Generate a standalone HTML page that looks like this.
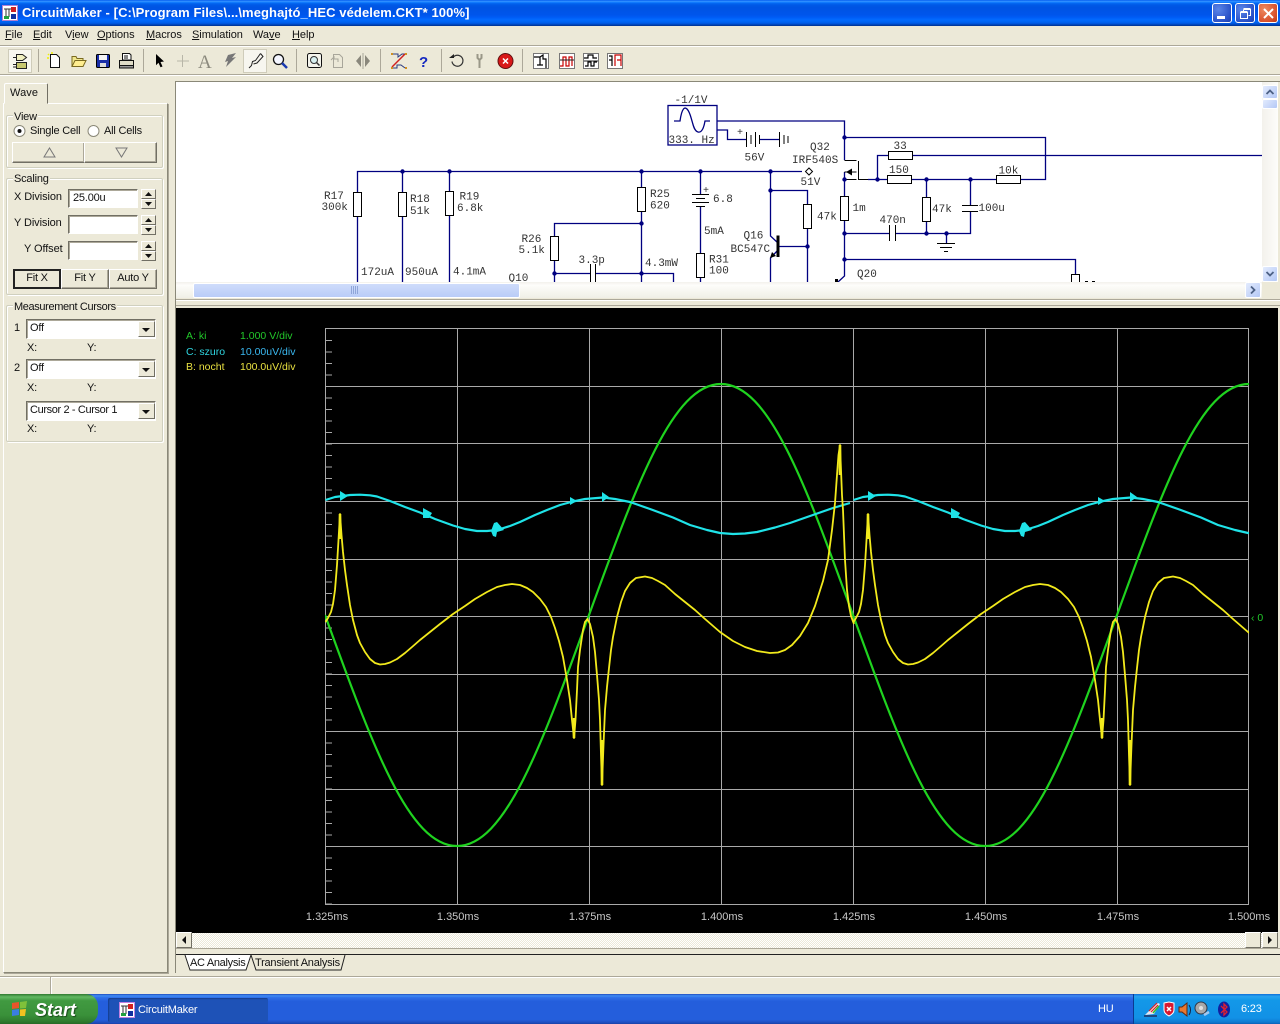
<!DOCTYPE html>
<html><head><meta charset="utf-8"><title>CircuitMaker</title>
<style>
html,body{margin:0;padding:0;width:1280px;height:1024px;overflow:hidden;background:#ece9d8}
body{position:relative;font-family:"Liberation Sans",sans-serif;font-size:11px;letter-spacing:-.2px;color:#111}
.a{position:absolute;box-sizing:border-box}
.t{position:absolute;white-space:nowrap;line-height:14px}
.m{letter-spacing:-.05px}
.u{text-decoration:underline}
.grp{position:absolute;box-sizing:border-box;border:1px solid #d0d0bf;box-shadow:inset 1px 1px 0 #fff,1px 1px 0 #fff;border-radius:2px}
.btn{position:absolute;box-sizing:border-box;background:#ece9d8;border:1px solid;border-color:#fff #716f64 #716f64 #fff;box-shadow:inset -1px -1px 0 #aca899;text-align:center;line-height:17px}
.inp{position:absolute;box-sizing:border-box;background:#fff;border:1px solid;border-color:#716f64 #fff #fff #716f64;box-shadow:inset 1px 1px 0 #aca899;padding-left:4px;line-height:17px}
.xb{position:absolute;box-sizing:border-box;width:20px;height:20px;top:3px;border:1px solid #fff;border-radius:3px;background:radial-gradient(circle at 30% 30%,#5a85e8,#2a52c8 70%,#1c3fae)}
.sb{position:absolute;box-sizing:border-box;width:16px;height:16px;background:linear-gradient(135deg,#e3ebfd,#b4c8f6);border:1px solid #fff;border-radius:2px}
.cl{position:absolute;box-sizing:border-box;background:#ece9d8;border:1px solid;border-color:#fff #716f64 #716f64 #fff}
svg{position:absolute;display:block}
</style></head>
<body>

<!-- Title bar -->
<div class="a" style="left:0;top:0;width:1280px;height:26px;background:linear-gradient(#0058ee,#3593ff 5%,#127dff 9%,#0262ee 14%,#0057e5 22%,#0054e3 30%,#0055eb 56%,#005bf5 66%,#026afe 76%,#0062ef 86%,#0052d6 92%,#0040ab 96%,#003092)"></div>
<svg style="left:2px;top:5px" width="16" height="16" viewBox="0 0 16 16"><rect x=".5" y=".5" width="15" height="15" fill="#fff" stroke="#b080d0"/><path d="M2 4h7M4 4v8M7 4v8" stroke="#333" fill="none"/><rect x="9" y="2" width="5" height="5" fill="#d02020"/><rect x="9" y="9" width="5" height="5" fill="#1030a0"/><rect x="2" y="11" width="5" height="3" fill="#20a040"/></svg>
<div class="t" style="left:22px;top:6px;color:#fff;font-weight:bold;font-size:13px;letter-spacing:.09px">CircuitMaker - [C:\Program Files\...\meghajtó_HEC védelem.CKT* 100%]</div>
<div class="xb" style="left:1212px"><div class="a" style="left:4px;top:12px;width:8px;height:3px;background:#fff"></div></div>
<div class="xb" style="left:1235px"><svg style="left:3px;top:3px" width="13" height="13"><path d="M4.500 2.500h7v6h-2M4.500 2.500v2M4.500 1.500h7" fill="none" stroke="#fff"/><rect x="1.500" y="5.500" width="7" height="6" fill="none" stroke="#fff"/><path d="M1.500 4.500h7" stroke="#fff"/></svg></div>
<div class="xb" style="left:1258px;background:radial-gradient(circle at 30% 30%,#ee8a60,#d8502c 70%,#b83a18)"><svg style="left:3px;top:3px" width="13" height="13"><path d="M2 2l9 9M11 2l-9 9" stroke="#fff" stroke-width="2"/></svg></div>

<!-- Menu -->
<div class="t m" style="left:5px;top:28px"><span class="u">F</span>ile</div>
<div class="t m" style="left:33px;top:28px"><span class="u">E</span>dit</div>
<div class="t m" style="left:65px;top:28px">V<span class="u">i</span>ew</div>
<div class="t m" style="left:97px;top:28px"><span class="u">O</span>ptions</div>
<div class="t m" style="left:146px;top:28px"><span class="u">M</span>acros</div>
<div class="t m" style="left:192px;top:28px"><span class="u">S</span>imulation</div>
<div class="t m" style="left:253px;top:28px">Wa<span class="u">v</span>e</div>
<div class="t m" style="left:292px;top:28px"><span class="u">H</span>elp</div>
<div class="a" style="left:0;top:45px;width:1280px;height:1px;background:#aca899"></div>
<div class="a" style="left:0;top:46px;width:1280px;height:1px;background:#fff"></div>
<div class="a" style="left:0;top:74px;width:1280px;height:1px;background:#aca899"></div>
<div class="a" style="left:0;top:75px;width:1280px;height:1px;background:#fff"></div>

<!-- Toolbar -->
<svg style="left:0;top:46px" width="640" height="30" viewBox="0 46 640 30">
<g fill="none" stroke="#aca899"><path d="M38.500 49v23M143.500 49v23M296.500 49v23M380.500 49v23M441.500 49v23M522.500 49v23"/></g>
<g fill="#f7f6ef"><rect x="8.500" y="49.500" width="23" height="23"/><rect x="243.500" y="49.500" width="23" height="23"/></g>
<g fill="none" stroke="#cfccba"><rect x="8.500" y="49.500" width="23" height="23"/><rect x="243.500" y="49.500" width="23" height="23"/></g>
<path d="M16.500 54.500h6l4 3-4 3h-6zM13 57.500h3M13 64.500h3M13 67h3" fill="#f0efc0" stroke="#222"/><path d="M16.500 62.500h10v6h-10z" fill="#c8c870" stroke="#222"/>
<path d="M50.500 54.500h6l3 3v10h-9z" fill="#fff" stroke="#111"/><path d="M48 54l1 1M47 58h2M52 52v2" stroke="#f0f000" stroke-width="1.500"/>
<path d="M72 66.500v-10h4l1 2h6v8z" fill="#f0e68c" stroke="#7a6a20"/><path d="M72 66.500l3-6h11l-3 6z" fill="#ffee90" stroke="#7a6a20"/>
<rect x="96.500" y="54.500" width="13" height="13" rx="1" fill="#1a2fa8" stroke="#000"/><rect x="99" y="55" width="8" height="5" fill="#f4f4f4"/><rect x="100" y="63" width="6" height="4" fill="#ddd"/>
<path d="M122.500 53.500h7l1.500 1.500v5h-8.500z" fill="#fff" stroke="#111"/><path d="M124 56h4M124 58h4" stroke="#111"/><rect x="119.500" y="60.500" width="14" height="5" fill="#e0ddc8" stroke="#111"/><rect x="119.500" y="65.500" width="14" height="2.500" fill="#999" stroke="#111"/>
<path d="M156 54l8 7.500-3.500.5 2 4.500-2 .8-2-4.500-2.500 2.500z" fill="#000"/>
<path d="M182.500 55v12M177 61h12" stroke="#b8b6a8"/>
<text x="198" y="68" font-family="Liberation Serif,serif" font-size="19" letter-spacing="0" fill="#8c8a7e">A</text>
<path d="M236 53l-8 2-3 7 3-1-2 6 10-10-4 1z" fill="#777"/>
<path d="M260.500 53.500l-5 7-3 1-1 4-2.500 2.500M260.500 53.500l2.500 3-6 6.500-3.500 1" fill="none" stroke="#222"/>
<circle cx="278.500" cy="59.500" r="5" fill="#f4f6ff" stroke="#111" stroke-width="1.300"/><path d="M282 63l5 5" stroke="#1a3ab0" stroke-width="2.500"/>
<rect x="307.500" y="53.500" width="14" height="14" rx="2" fill="#f4f4ec" stroke="#111"/><circle cx="314" cy="60" r="3.500" fill="#d8f0f0" stroke="#333"/><path d="M316.500 62.500l3 3" stroke="#333" stroke-width="1.500"/>
<path d="M333.500 54.500h6l3 3v10h-9zM331 60l3-3v2h4v3" fill="none" stroke="#a8a69a"/>
<path d="M361 55l-5 6 5 6zM365 55l5 6-5 6z" fill="#8a887c"/><path d="M363 53v16" stroke="#a8a69a"/>
<path d="M392 54h6v3l4-3h3M392 68h5v-3h4l4 3" fill="none" stroke="#2a3a80"/><path d="M392 67l13-13" stroke="#d02020" stroke-width="1.500"/><g fill="#d09020"><rect x="391" y="53" width="2" height="2"/><rect x="405" y="53" width="2" height="2"/><rect x="391" y="67" width="2" height="2"/><rect x="405" y="67" width="2" height="2"/></g>
<text x="419" y="67" font-family="Liberation Sans,sans-serif" font-weight="bold" font-size="15" letter-spacing="0" fill="#1428c0">?</text>
<path d="M453 57.500a5.500 5.500 0 1 1-1 4" fill="none" stroke="#333" stroke-width="1.200"/><path d="M449 58h5v-4z" fill="#222"/>
<path d="M477.500 54v4l2 2 2-2v-4M479.500 60v8" fill="none" stroke="#9a9888" stroke-width="2"/>
<circle cx="505.500" cy="61" r="7.500" fill="#d81818" stroke="#601010"/><path d="M503 58.500l5 5M508 58.500l-5 5" stroke="#fff" stroke-width="1.500"/>
<rect x="533.500" y="53.500" width="15" height="15" fill="#fff" stroke="#777"/><path d="M534 57h6v8M540 57l3-2v4h3v9M537 65h6" fill="none" stroke="#000" stroke-width="1.200"/>
<rect x="559.500" y="53.500" width="15" height="15" fill="#fff" stroke="#777"/><path d="M560 66h3v-9h3v9h3v-9h3v9" fill="none" stroke="#c80000" stroke-width="1.200"/><path d="M560 60h14" stroke="#222"/>
<rect x="583.500" y="53.500" width="15" height="15" fill="#fff" stroke="#777"/><path d="M584 58h4v-3h5v3h4M585 66h3v-4h3v4h3v-4h3" fill="none" stroke="#000" stroke-width="1.200"/><path d="M584 61h14" stroke="#222"/>
<rect x="607.500" y="53.500" width="15" height="15" fill="#fff" stroke="#777"/><path d="M609 56h3v10M609 60h3" fill="none" stroke="#000" stroke-width="1.200"/><path d="M615 66v-11h6v11M617 60h4" fill="none" stroke="#c80000" stroke-width="1.200"/>
</svg>

<!-- Left panel -->
<div class="a" style="left:3px;top:103px;width:165px;height:870px;border:1px solid;border-color:#fff #8a8878 #8a8878 #fff;box-shadow:1px 1px 0 #aca899"></div>
<div class="a" style="left:4px;top:83px;width:44px;height:21px;background:#ece9d8;border:1px solid;border-color:#fff #716f64 transparent #fff;border-radius:2px 2px 0 0"></div>
<div class="t" style="left:10px;top:86px;letter-spacing:.1px">Wave</div>

<div class="grp" style="left:6px;top:115px;width:157px;height:53px"></div>
<div class="t" style="left:13px;top:110px;background:#ece9d8;padding:0 1px">View</div>
<svg style="left:13px;top:124px" width="90" height="14"><circle cx="6.500" cy="7" r="5.500" fill="#fff" stroke="#8a8878"/><circle cx="6.500" cy="7" r="2" fill="#111"/><circle cx="80.500" cy="7" r="5.500" fill="#fff" stroke="#8a8878"/></svg>
<div class="t" style="left:30px;top:124px">Single Cell</div>
<div class="t" style="left:104px;top:124px">All Cells</div>
<div class="btn" style="left:12px;top:142px;width:73px;height:21px"></div>
<div class="btn" style="left:84px;top:142px;width:73px;height:21px"></div>
<svg style="left:40px;top:146px" width="90" height="13"><path d="M4 11L9.500 2 15 11z M76 2h11l-5.500 9z" fill="none" stroke="#777"/></svg>

<div class="grp" style="left:6px;top:178px;width:157px;height:117px"></div>
<div class="t" style="left:13px;top:172px;background:#ece9d8;padding:0 1px">Scaling</div>
<div class="t" style="left:14px;top:190px;letter-spacing:-.1px">X Division</div>
<div class="inp" style="left:68px;top:189px;width:70px;height:19px">25.00u</div>
<div class="t" style="left:14px;top:216px;letter-spacing:-.1px">Y Division</div>
<div class="inp" style="left:68px;top:215px;width:70px;height:19px"></div>
<div class="t" style="left:24px;top:242px;letter-spacing:-.1px">Y Offset</div>
<div class="inp" style="left:68px;top:241px;width:70px;height:19px"></div>
<div class="cl" style="left:141px;top:189px;width:15px;height:10px"></div><div class="cl" style="left:141px;top:199px;width:15px;height:10px"></div>
<div class="cl" style="left:141px;top:215px;width:15px;height:10px"></div><div class="cl" style="left:141px;top:225px;width:15px;height:10px"></div>
<div class="cl" style="left:141px;top:241px;width:15px;height:10px"></div><div class="cl" style="left:141px;top:251px;width:15px;height:10px"></div>
<svg style="left:141px;top:189px" width="15" height="72"><path d="M4 7h7L7.500 3zM4 13h7l-3.500 4zM4 33h7L7.500 29zM4 39h7l-3.500 4zM4 59h7L7.500 55zM4 65h7l-3.500 4z" fill="#111"/></svg>
<div class="btn" style="left:13px;top:269px;width:48px;height:20px;border:2px solid #222;line-height:15px;box-shadow:none">Fit X</div>
<div class="btn" style="left:61px;top:269px;width:48px;height:20px">Fit Y</div>
<div class="btn" style="left:109px;top:269px;width:48px;height:20px">Auto Y</div>

<div class="grp" style="left:6px;top:305px;width:157px;height:137px"></div>
<div class="t" style="left:13px;top:300px;background:#ece9d8;padding:0 1px;letter-spacing:-.37px">Measurement Cursors</div>
<div class="t" style="left:14px;top:321px">1</div>
<div class="inp" style="left:26px;top:319px;width:130px;height:20px;padding-left:3px">Off</div>
<div class="t" style="left:27px;top:341px">X:</div><div class="t" style="left:87px;top:341px">Y:</div>
<div class="t" style="left:14px;top:361px">2</div>
<div class="inp" style="left:26px;top:359px;width:130px;height:20px;padding-left:3px">Off</div>
<div class="t" style="left:27px;top:381px">X:</div><div class="t" style="left:87px;top:381px">Y:</div>
<div class="inp" style="left:26px;top:401px;width:130px;height:20px;padding-left:3px;letter-spacing:-.37px">Cursor 2 - Cursor 1</div>
<div class="t" style="left:27px;top:422px">X:</div><div class="t" style="left:87px;top:422px">Y:</div>
<div class="cl" style="left:138px;top:321px;width:17px;height:16px"></div><div class="cl" style="left:138px;top:361px;width:17px;height:16px"></div><div class="cl" style="left:138px;top:403px;width:17px;height:16px"></div>
<svg style="left:138px;top:321px" width="17" height="100"><path d="M4 7h8l-4 4zM4 47h8l-4 4zM4 89h8l-4 4z" fill="#111"/></svg>

<!-- Circuit view -->
<div class="a" style="left:175px;top:81px;width:1105px;height:1px;background:#8a8878"></div>
<div class="a" style="left:175px;top:81px;width:1px;height:892px;background:#8a8878"></div>
<div class="a" style="left:176px;top:82px;width:1086px;height:200px;background:#fff"></div>
<svg style="left:176px;top:82px;letter-spacing:0" width="1086" height="200" viewBox="176 82 1086 200">
<g fill="none" stroke="#000080" stroke-width="1.300">
<path d="M357.500 282V171.500H802"/>
<path d="M402.500 171.500V282M449.500 171.500V282M641.500 171.500V282M554.500 282V223.500H641.500"/>
<path d="M554.500 273.500H590M596 273.500H673.500V282"/>
<path d="M700.500 171.500V194M700.500 206V282"/>
<path d="M770.500 171.500V236L778 243M778 250L770.500 258V282M770.500 190.500H807.500V282M778 246.500H807.500"/>
<path d="M717 121H844.500V160M844.500 137.500H1045.500V179.500H868M717 130H727.500V139.500H746M760 139.500H779"/>
<path d="M877.500 179.500V155.500H1262"/>
<path d="M844.500 172V276L838 282"/>
<path d="M844.500 233.500H890M896 233.500H970.500V212M970.500 206V179.500M926.500 179.500V233.500"/>
<path d="M946.500 233.500V243M844.500 259.500H1075.500V274"/>
<rect x="668" y="105.500" width="49" height="39.500" fill="#fff"/>
<path d="M674 121h6c2-14 5-14 7-12 3 3 4 9 5 12s2 10 6 11c4 1 6-5 7-11h5" />
</g>
<g fill="#fff" stroke="#000" stroke-width="1">
<rect x="353.500" y="192.500" width="8" height="24"/><rect x="398.500" y="192.500" width="8" height="24"/><rect x="445.500" y="191.500" width="8" height="24"/>
<rect x="637.500" y="187.500" width="8" height="24"/><rect x="550.500" y="236.500" width="8" height="24"/><rect x="696.500" y="253.500" width="8" height="24"/>
<rect x="803.500" y="204.500" width="8" height="24"/><rect x="840.500" y="196.500" width="8" height="24"/><rect x="922.500" y="197.500" width="8" height="24"/>
<rect x="888.500" y="151.500" width="24" height="8"/><rect x="887.500" y="175.500" width="24" height="8"/><rect x="996.500" y="175.500" width="24" height="8"/>
<path d="M809 168l3.500 3.500-3.500 3.500-3.500-3.500z"/>
</g>
<g fill="none" stroke="#000" stroke-width="1">
<path d="M590.500 264V282M595.500 264V282M889.500 225V241M895.500 225V241M962 205.500H978M962 211.500H978"/>
<path d="M692 194.500H709M696 198.500H705M692 202.500H709M696 206.500H705"/>
<path d="M746.500 132V147M751 135V144M755.500 132V147M759.500 135V144M779.500 132V147M784 135V144M788 136V143"/>
<path d="M937 243.500H955M940 247.500H952M944 251.500H948"/>
<path d="M844.500 160.500H856.500M844.500 172H856.500M844.500 179.500H856.500M858.500 161V180M858.500 179.500H868"/>
<path d="M1071.500 282V274.500H1079.500V282M1085 281.500h3M1092 281.500h3"/>
</g>
<path d="M778 235.500V257" stroke="#000" stroke-width="3"/><path d="M836.500 279V282" stroke="#000" stroke-width="3"/>
<path d="M770 258l2-6 4 4z" fill="#000"/><path d="M846 172l6-3.500v7z" fill="#000"/>
<g fill="#000080"><circle cx="402.500" cy="171.500" r="2.200"/><circle cx="449.500" cy="171.500" r="2.200"/><circle cx="641.500" cy="171.500" r="2.200"/><circle cx="641.500" cy="223.500" r="2.200"/><circle cx="641.500" cy="273.500" r="2.200"/><circle cx="554.500" cy="273.500" r="2.200"/><circle cx="700.500" cy="171.500" r="2.200"/><circle cx="770.500" cy="171.500" r="2.200"/><circle cx="770.500" cy="190.500" r="2.200"/><circle cx="807.500" cy="246.500" r="2.200"/><circle cx="844.500" cy="137.500" r="2.200"/><circle cx="844.500" cy="179.500" r="2.200"/><circle cx="844.500" cy="233.500" r="2.200"/><circle cx="844.500" cy="259.500" r="2.200"/><circle cx="877.500" cy="179.500" r="2.200"/><circle cx="926.500" cy="179.500" r="2.200"/><circle cx="970.500" cy="179.500" r="2.200"/><circle cx="926.500" cy="233.500" r="2.200"/><circle cx="946.500" cy="233.500" r="2.200"/></g>
<g font-family="Liberation Mono,monospace" font-size="11" fill="#333">
<text x="324" y="199">R17</text><text x="321.500" y="210">300k</text>
<text x="410" y="202">R18</text><text x="410" y="214">51k</text>
<text x="459.500" y="199.500">R19</text><text x="457" y="211">6.8k</text>
<text x="650" y="197">R25</text><text x="650" y="208.500">620</text>
<text x="521.500" y="242">R26</text><text x="518.500" y="253">5.1k</text>
<text x="578.500" y="263">3.3p</text>
<text x="361" y="275">172uA</text><text x="405" y="275">950uA</text><text x="453" y="274.500">4.1mA</text>
<text x="645" y="266">4.3mW</text><text x="508.500" y="281">Q10</text>
<text x="713" y="202">6.8</text><text x="704" y="234">5mA</text>
<text x="709" y="262.500">R31</text><text x="709" y="273.500">100</text>
<text x="674.500" y="103">-1/1V</text><text x="668.500" y="143">333. Hz</text>
<text x="744.500" y="160.500">56V</text><text x="810" y="150">Q32</text><text x="792" y="163">IRF540S</text><text x="800.500" y="185">51V</text>
<text x="893.500" y="149">33</text><text x="889" y="173">150</text><text x="998.500" y="173.500">10k</text>
<text x="852.500" y="211">1m</text><text x="879.500" y="223">470n</text><text x="817" y="219.500">47k</text><text x="932" y="212">47k</text><text x="978.500" y="211">100u</text>
<text x="743.500" y="238.500">Q16</text><text x="730.500" y="252">BC547C</text><text x="857" y="277">Q20</text>
<text x="703" y="193" font-size="10">+</text><text x="737" y="135" font-size="10">+</text>
</g>
</svg>

<!-- Circuit scrollbars -->
<div class="a" style="left:1262px;top:82px;width:16px;height:200px;background:linear-gradient(90deg,#f3f1ec,#fdfdfa)"></div>
<div class="sb" style="left:1262px;top:85px;height:14px"></div>
<div class="sb" style="left:1262px;top:99px;height:10px"></div>
<div class="sb" style="left:1262px;top:266px"></div>
<svg style="left:1262px;top:85px" width="16" height="197"><path d="M4.500 9l3.500-3.500L11.500 9M4.500 187l3.500 3.500 3.500-3.500" fill="none" stroke="#4d6185" stroke-width="1.800"/></svg>
<div class="a" style="left:176px;top:282px;width:1086px;height:16px;background:linear-gradient(#f3f1ec,#fdfdfa 20%,#f0efe6)"></div>
<div class="a" style="left:193px;top:283px;width:327px;height:15px;background:linear-gradient(#cfdcfb,#b9ccf7);border:1px solid #fff;border-radius:2px"></div>
<svg style="left:350px;top:286px" width="12" height="8"><path d="M1.500 0v8M3.500 0v8M5.500 0v8M7.500 0v8" stroke="#8fa5d8"/></svg>
<div class="sb" style="left:1245px;top:282px"></div>
<svg style="left:1245px;top:282px" width="16" height="16"><path d="M6 4.500l3.500 3.500L6 11.500" fill="none" stroke="#4d6185" stroke-width="1.800"/></svg>
<div class="a" style="left:176px;top:299px;width:1104px;height:1px;background:#aca899"></div>
<div class="a" style="left:176px;top:300px;width:1104px;height:1px;background:#fff"></div>
<div class="a" style="left:176px;top:305px;width:1104px;height:1px;background:#aca899"></div>

<!-- Plot -->
<div class="a" style="left:176px;top:308px;width:1102px;height:625px;background:#000"></div>
<svg style="left:176px;top:308px;letter-spacing:0" width="1102" height="625" viewBox="176 308 1102 625">
<defs><clipPath id="c"><rect x="325" y="328" width="924" height="577"/></clipPath></defs>
<g fill="none" stroke="#a9a9a9" stroke-width="1">
<path d="M325.500 328V904M457.500 328V904M589.500 328V904M721.500 328V904M853.500 328V904M985.500 328V904M1117.500 328V904M1248.500 328V904"/>
<path d="M325 328.500H1249M325 386.500H1249M325 443.500H1249M325 501.500H1249M325 559.500H1249M325 616.500H1249M325 674.500H1249M325 731.500H1249M325 789.500H1249M325 846.500H1249M325 904.500H1249"/>
<path d="M329 340V904" stroke-width="6" stroke-dasharray="1 10.500"/>
</g>
<g clip-path="url(#c)">
<path fill="none" stroke="#1fd31f" stroke-width="2.200" d="M325 615C373 747 409 846 457 846C505 846 541 747 589 615C637 483 673 384 721 384C769 384 805 483 853 615C901 747 937 846 985 846C1033 846 1069 747 1117 615C1165 483 1201 384 1249 384"/>
<g id="cy"><polyline fill="none" stroke="#1fe3e8" stroke-width="2.200" stroke-linejoin="round" points="325.500,500 335,497 343,496 350,495 360,494.700 370,495.300 377,496.500 390,501 405,507 420,512.500 435,519 453,525.500 465,529 477,531 487,531 497,530 510,526 520,522 535,515 547,510 560,505 573,501.500 585,499 603,497.500 615,499 630,502 650,509 673,517.500 690,525 707,530 720,533 733,534 745,533.500 757,532 775,527.500 790,523 810,516 833,508 850,503"/>
<g fill="#1fe3e8"><path d="M340 491l8 5-8 5z"/><path d="M423 508l9 5-3 5h-6z"/><path d="M494 523l3-1 7 8-7 2-1 5-3-1-2-5z"/><path d="M570 497l7 4-7 4z"/><path d="M602 492l7 5-7 5z"/></g></g>
<use href="#cy" x="528"/>
<g id="ye"><polyline fill="none" stroke="#f2ea1c" stroke-width="1.800" stroke-linejoin="round" points="325.500,622 328,618 331,612 333,604 335,590 337,565 338.500,540 340,514 341.500,535 343,552 345,570 347,585 350,605 353,620 357,635 360,643 365,652 370,659 375,663 380,664.500 385,664 390,662.500 397,659 405,653 412,647 420,640 430,632 440,624 453,614 465,606 475,599 487,592 497,587 505,585 512,584 520,585 527,588 533,592 540,599 546,607 551,617 555,628 559,641 563,657 567,680 570,700 572,720 574,738 575.500,720 577,690 578,667 580,650 583,630 585,622 587.500,619 590,624 593,637 595,652 597,675 599,700 600,720 601,755 602,785 603.500,745 605,710 607,687 609,668 611,650 613,637 617,617 621,602 625,591 630,583 636,578 645,576.500 652,578 658,581 665,585 675,594 685,602 695,610 705,619 720,632 733,641 745,647 757,651 770,653 778,652.500 785,650 792,645 800,636 808,623 815,606 823,581 828,560 832,530 835,503 837,475 838.500,455 840,445 841,470 842,495 843,510 845,560 847,590 849,606 851,616 854,624"/>
<path d="M340 514v25M574 738v-20M602 785v-45M840 445v30" stroke="#f2ea1c" stroke-width="2.600"/></g>
<use href="#ye" x="528"/>
</g>
<g font-family="Liberation Sans,sans-serif" font-size="10.500">
<text x="186" y="339" fill="#22c82a">A: ki</text><text x="240" y="339" fill="#22c82a">1.000 V/div</text>
<text x="186" y="355" fill="#2fd5e0">C: szuro</text><text x="240" y="355" fill="#3ab8f0">10.00uV/div</text>
<text x="186" y="370" fill="#e8e040">B: nocht</text><text x="240" y="370" fill="#e8e040">100.0uV/div</text>
<text x="1251" y="621" fill="#22c82a">‹ 0</text>
</g>
<g font-family="Liberation Sans,sans-serif" font-size="11" fill="#c8c8c8" text-anchor="middle">
<text x="327" y="920">1.325ms</text><text x="458" y="920">1.350ms</text><text x="590" y="920">1.375ms</text><text x="722" y="920">1.400ms</text><text x="854" y="920">1.425ms</text><text x="986" y="920">1.450ms</text><text x="1118" y="920">1.475ms</text><text x="1249" y="920">1.500ms</text>
</g>
</svg>

<!-- Plot scrollbar -->
<div class="a" style="left:176px;top:933px;width:1102px;height:15px;background:repeating-conic-gradient(#fff 0 25%,#ece9d8 0 50%) 0 0/2px 2px"></div>
<div class="cl" style="left:176px;top:932px;width:16px;height:16px"></div>
<div class="cl" style="left:1245px;top:932px;width:16px;height:16px"></div>
<div class="cl" style="left:1262px;top:932px;width:16px;height:16px"></div>
<svg style="left:176px;top:932px" width="1102" height="16"><path d="M6 8l4-4v8zM1092 4l4 4-4 4z" fill="#111"/></svg>
<div class="a" style="left:176px;top:948px;width:1104px;height:1px;background:#aca899"></div>
<div class="a" style="left:176px;top:954px;width:1104px;height:1px;background:#222"></div>

<!-- Sheet tabs -->
<svg style="left:176px;top:954px" width="200" height="18"><path d="M9 1l5 15h56l5-15" fill="#fff" stroke="#222"/><path d="M75 1l5 15h85l4-15" fill="#ece9d8" stroke="#222"/></svg>
<div class="t" style="left:190px;top:956px;letter-spacing:-.3px">AC Analysis</div>
<div class="t" style="left:255px;top:956px;letter-spacing:-.22px">Transient Analysis</div>

<!-- Status bar -->
<div class="a" style="left:0;top:976px;width:1280px;height:1px;background:#aca899"></div>
<div class="a" style="left:0;top:977px;width:1280px;height:1px;background:#fff"></div>
<div class="a" style="left:50px;top:977px;width:1px;height:17px;background:#aca899"></div>
<div class="a" style="left:51px;top:977px;width:1px;height:17px;background:#fff"></div>

<!-- Taskbar -->
<div class="a" style="left:0;top:994px;width:1280px;height:30px;background:linear-gradient(#1f4bbd,#3f8cf3 6%,#2f6fe8 12%,#245edc 25%,#245edc 85%,#1f50c4 94%,#1941a5)"></div>
<div class="a" style="left:0;top:994px;width:98px;height:30px;border-radius:0 12px 12px 0;background:linear-gradient(#2f7a2f,#62b862 10%,#419a41 22%,#3a913a 70%,#2f7d2f 90%,#266a26)"></div>
<svg style="left:10px;top:1000px" width="20" height="18"><path d="M2 3l7-1v6l-7 1z" fill="#e8552a"/><path d="M10 2l7-1-1 7-6 .5z" fill="#7fc13a"/><path d="M2 10l7-1v6l-7 1z" fill="#3a7ee0"/><path d="M10 9.500l6-.5-1 7-5 0z" fill="#f2c220"/></svg>
<div class="t" style="left:35px;top:1000px;color:#fff;font-weight:bold;font-style:italic;font-size:18px;letter-spacing:0;line-height:20px;text-shadow:1px 1px 1px #1a4a1a">Start</div>
<div class="a" style="left:108px;top:998px;width:160px;height:24px;background:#1e52b7;border-radius:2px;box-shadow:inset 1px 1px 1px #163f90"></div>
<svg style="left:119px;top:1002px" width="16" height="16" viewBox="0 0 16 16"><rect x=".5" y=".5" width="15" height="15" fill="#fff" stroke="#c080e0"/><path d="M2 4h7M4 4v8M7 4v8" stroke="#333" fill="none"/><rect x="9" y="2" width="5" height="5" fill="#d02020"/><rect x="9" y="9" width="5" height="5" fill="#1030a0"/><rect x="2" y="11" width="5" height="3" fill="#20a040"/></svg>
<div class="t" style="left:138px;top:1003px;color:#fff">CircuitMaker</div>
<div class="t" style="left:1098px;top:1002px;color:#fff">HU</div>
<div class="a" style="left:1133px;top:994px;width:147px;height:30px;background:linear-gradient(#0e6fd8,#27a3f0 8%,#1398e8 20%,#1291e6 80%,#0f7ad0 94%,#0b60b8);border-left:1px solid #0b3a90"></div>
<svg style="left:1143px;top:1000px" width="90" height="20">
<path d="M2 15l5-5 8-7 2 1-6 10z" fill="#e8e8f0"/><path d="M6 11l8-8M8 12l7-7" stroke="#e02020" stroke-width="1.200"/><path d="M10 13l6-7" stroke="#30c030" stroke-width="1.500"/><path d="M1 16h13" stroke="#203060" stroke-width="1.500"/>
<path d="M21 3l5-1 5 1v7c0 3-3 5-5 6-2-1-5-3-5-6z" fill="#d81830" stroke="#fff"/><path d="M24 7l4 4M28 7l-4 4" stroke="#fff" stroke-width="1.500"/>
<path d="M36 7h3l5-4v13l-5-4h-3z" fill="#e87830" stroke="#602810"/><path d="M46 5c2 3 2 7 0 10" fill="none" stroke="#102040"/>
<circle cx="58" cy="8" r="6" fill="#a8a8a8" stroke="#303848"/><circle cx="58" cy="8" r="2" fill="#e0e0e0"/><path d="M61 15l5-3" stroke="#a0c8f0" stroke-width="2.500"/>
<ellipse cx="81" cy="9.500" rx="6" ry="8" fill="#1020a0"/><path d="M78 6l6 6-3 3V4l3 3-6 6" fill="none" stroke="#e02030" stroke-width="1.300"/>
</svg>
<div class="t" style="left:1241px;top:1002px;color:#fff">6:23</div>

</body></html>
